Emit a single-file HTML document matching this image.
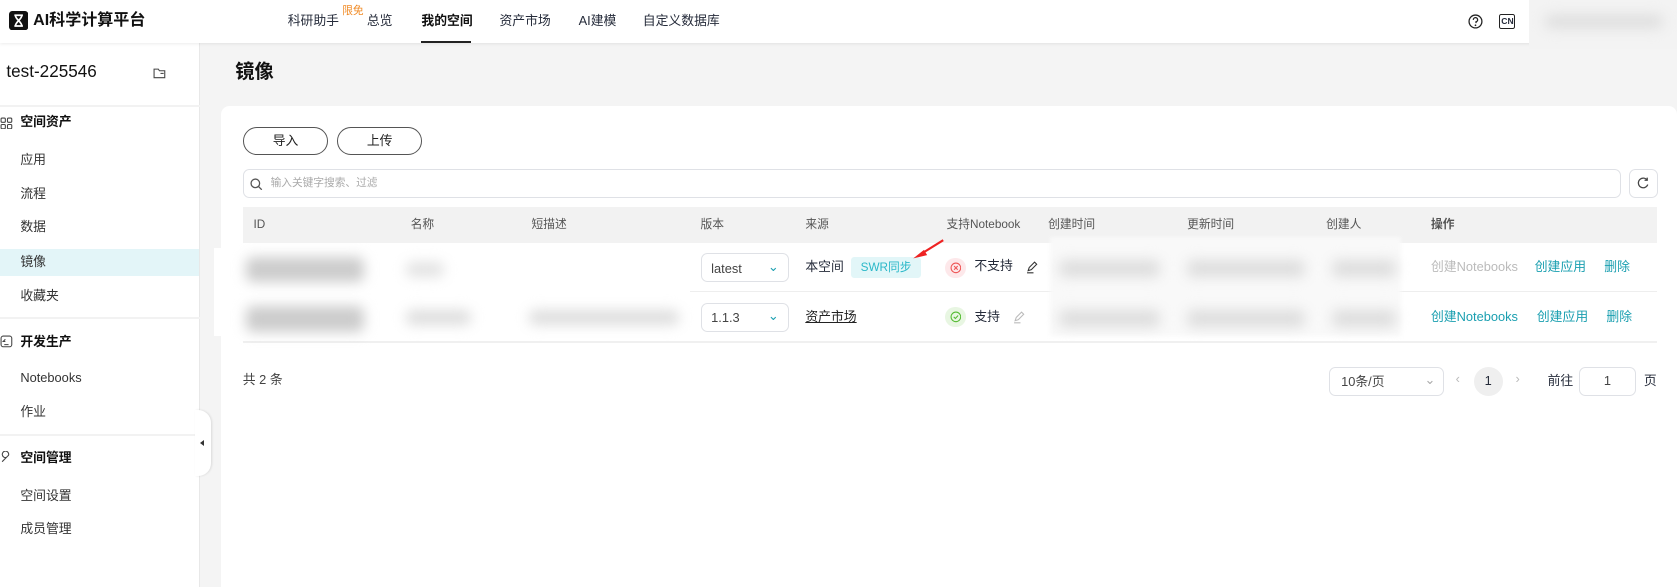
<!DOCTYPE html>
<html><head><meta charset="utf-8"><style>
*{margin:0;padding:0;box-sizing:border-box}
html,body{width:1677px;height:587px;overflow:hidden;background:#f4f4f4}
body{font-family:"Liberation Sans","Noto Sans CJK SC",sans-serif;color:#252b3a;font-size:12px;line-height:1.1}
#w{position:relative;width:1568px;height:549px;zoom:1.0695;background:#f4f4f4}
.a{position:absolute;white-space:nowrap}
.hdr{left:0;top:0;width:1568px;height:40px;background:#fff;box-shadow:0 1px 3px rgba(0,0,0,.08);z-index:2}
.side{left:0;top:40px;width:187px;height:509px;background:#fff;border-right:1px solid #e8e8e8}
.hr{position:absolute;left:0;width:187px;height:2px;background:#f2f2f2}
.si{position:absolute;left:19px;font-size:12px;color:#333}
.sh{position:absolute;left:19px;font-size:12px;font-weight:bold;color:#111}
.card{left:207px;top:99px;width:1361px;height:460px;background:#fff;border-radius:8px}
.btn{position:absolute;height:26px;border:1px solid #555;border-radius:13px;text-align:center;line-height:24px;font-size:12px;color:#222}
.th{position:absolute;top:205px;font-size:11px;color:#555}
.teal{color:#1a9fb0}
.blur{position:absolute;background:#ccc;border-radius:6px;filter:blur(6px)}
.sel{position:absolute;border:1px solid #dfe1e6;border-radius:6px;background:#fff;font-size:12px;color:#444}
</style></head><body><div id="w">
<div class="a hdr">
 <svg class="a" style="left:8px;top:10px" width="18" height="18" viewBox="0 0 18 18"><rect width="18" height="18" rx="3" fill="#111"/><path d="M5 4h8M5 14h8M6 4c0 4 6 6 6 10M12 4c0 4-6 6-6 10" stroke="#fff" stroke-width="1.6" fill="none"/></svg>
 <div class="a" style="left:31px;top:11px;font-size:15px;font-weight:bold;color:#111">AI科学计算平台</div>
 <div class="a" style="left:269px;top:13px">科研助手</div>
 <div class="a" style="left:320px;top:6px;font-size:10px;color:#f08a24">限免</div>
 <div class="a" style="left:343px;top:13px">总览</div>
 <div class="a" style="left:394px;top:13px;font-weight:bold;color:#111">我的空间</div>
 <div class="a" style="left:394px;top:38px;width:46px;height:2px;background:#222"></div>
 <div class="a" style="left:467px;top:13px">资产市场</div>
 <div class="a" style="left:541px;top:13px">AI建模</div>
 <div class="a" style="left:601px;top:13px">自定义数据库</div>
 <svg class="a" style="left:1373px;top:13px" width="14" height="14" viewBox="0 0 14 14"><circle cx="7" cy="7" r="6" stroke="#222" stroke-width="1.2" fill="none"/><path d="M5 5.5a2 2 0 1 1 2.5 1.8V8.5" stroke="#222" stroke-width="1.2" fill="none"/><circle cx="7" cy="10.5" r=".8" fill="#222"/></svg>
 <div class="a" style="left:1402px;top:13px;width:15px;height:14px;border:1.2px solid #222;border-radius:2px;font-size:8px;line-height:12px;text-align:center;font-weight:bold">CN</div>
 <div class="a" style="left:1430px;top:0;width:138px;height:46px;background:#f3f3f3"></div>
 <div class="blur" style="left:1445px;top:14px;width:110px;height:12px;background:#ddd"></div>
</div>
<div class="a side">
 <div class="a" style="left:6px;top:19px;font-size:16px;color:#111">test-225546</div>
 <svg class="a" style="left:143px;top:23px" width="12" height="11" viewBox="0 0 12 11"><path d="M1 2h4l1 1.5h5v6.5H1z" stroke="#444" fill="none"/><path d="M7 6h3" stroke="#444"/></svg>
 <div class="hr" style="top:58px"></div>
 <svg class="a" style="left:0;top:69px" width="12" height="12" viewBox="0 0 12 12"><g stroke="#444" fill="none"><rect x="1" y="1" width="4" height="4" rx="1"/><rect x="7" y="1" width="4" height="4" rx="1"/><rect x="1" y="7" width="4" height="4" rx="1"/><rect x="7" y="7" width="4" height="4" rx="1"/></g></svg>
 <div class="sh" style="top:68px">空间资产</div>
 <div class="si" style="top:103px">应用</div>
 <div class="si" style="top:135px">流程</div>
 <div class="si" style="top:166px">数据</div>
 <div class="a" style="left:0;top:193px;width:186px;height:25px;background:#e3f5f8"></div>
 <div class="si" style="top:198px">镜像</div>
 <div class="si" style="top:230px">收藏夹</div>
 <div class="hr" style="top:256px"></div>
 <svg class="a" style="left:0;top:273px" width="12" height="12" viewBox="0 0 12 12"><rect x="1" y="1" width="10" height="10" rx="2" stroke="#444" fill="none"/><path d="M5 4l-2 2 2 0M4 9h4" stroke="#444" fill="none"/></svg>
 <div class="sh" style="top:273px">开发生产</div>
 <div class="si" style="top:307px">Notebooks</div>
 <div class="si" style="top:339px">作业</div>
 <div class="hr" style="top:366px"></div>
 <svg class="a" style="left:0;top:382px" width="12" height="12" viewBox="0 0 12 12"><path d="M2 10l4-4a3 3 0 1 1 2-2l-4 4z" stroke="#444" fill="none"/></svg>
 <div class="sh" style="top:382px">空间管理</div>
 <div class="si" style="top:417px">空间设置</div>
 <div class="si" style="top:448px">成员管理</div>
</div>
<div class="a" style="left:182px;top:383px;width:15px;height:62px;background:#fff;border-radius:0 12px 12px 0;box-shadow:1px 0 2px rgba(0,0,0,.1)"></div>
<div class="a" style="left:187px;top:411px;width:0;height:0;border-top:3px solid transparent;border-bottom:3px solid transparent;border-right:4px solid #333"></div>
<div class="a" style="left:220px;top:58px;font-size:18px;font-weight:bold;color:#111">镜像</div>
<div class="a card"></div>
<div class="btn" style="left:227px;top:119px;width:80px">导入</div>
<div class="btn" style="left:315px;top:119px;width:80px">上传</div>
<div class="a" style="left:227px;top:158px;width:1289px;height:27px;border:1px solid #dfe1e6;border-radius:6px"></div>
<svg class="a" style="left:234px;top:166px" width="12" height="12" viewBox="0 0 12 12"><circle cx="5" cy="5" r="4" stroke="#555" stroke-width="1.2" fill="none"/><path d="M8 8l3 3" stroke="#555" stroke-width="1.2"/></svg>
<div class="a" style="left:253px;top:166px;font-size:10px;color:#aaa">输入关键字搜索、过滤</div>
<div class="a" style="left:1523px;top:158px;width:27px;height:27px;border:1px solid #dfe1e6;border-radius:6px"></div>
<svg class="a" style="left:1530px;top:165px" width="13" height="13" viewBox="0 0 13 13"><path d="M10.5 4A4.5 4.5 0 1 0 11 8" stroke="#444" stroke-width="1.2" fill="none"/><path d="M10.5 1.5V4H8" stroke="#444" stroke-width="1.2" fill="none"/></svg>
<div class="a" style="left:227px;top:194px;width:1322px;height:33px;background:#f2f2f2"></div>
<div class="th" style="left:237px">ID</div><div class="th" style="left:384px">名称</div><div class="th" style="left:497px">短描述</div><div class="th" style="left:655px">版本</div><div class="th" style="left:753px">来源</div><div class="th" style="left:885px">支持Notebook</div><div class="th" style="left:980px">创建时间</div><div class="th" style="left:1110px">更新时间</div><div class="th" style="left:1240px">创建人</div><div class="th" style="left:1338px;font-weight:bold">操作</div>
<div class="a" style="left:227px;top:272px;width:1322px;height:1px;background:#eee"></div>
<div class="a" style="left:227px;top:319px;width:1322px;height:2px;background:#f0f0f0"></div>
<div class="a" style="left:200px;top:232px;width:445px;height:82px;background:#fff"></div>
<div class="blur" style="left:230px;top:240px;width:110px;height:24px"></div>
<div class="blur" style="left:380px;top:245px;width:35px;height:14px;background:#e2e2e2"></div>
<div class="blur" style="left:230px;top:286px;width:110px;height:24px"></div>
<div class="blur" style="left:380px;top:290px;width:60px;height:14px;background:#ddd"></div>
<div class="blur" style="left:495px;top:290px;width:140px;height:14px;background:#ddd"></div>
<div class="a" style="left:982px;top:222px;width:328px;height:92px;background:#f9f9f9;filter:blur(2px)"></div>
<div class="blur" style="left:990px;top:243px;width:95px;height:16px;background:#ddd"></div>
<div class="blur" style="left:1110px;top:243px;width:110px;height:16px;background:#ddd"></div>
<div class="blur" style="left:1245px;top:243px;width:60px;height:16px;background:#ddd"></div>
<div class="blur" style="left:990px;top:290px;width:95px;height:16px;background:#ddd"></div>
<div class="blur" style="left:1110px;top:290px;width:110px;height:16px;background:#ddd"></div>
<div class="blur" style="left:1245px;top:290px;width:60px;height:16px;background:#ddd"></div>
<div class="sel" style="left:655px;top:237px;width:83px;height:27px"><span class="a" style="left:9px;top:7px">latest</span><span class="a teal" style="left:62px;top:5px">⌄</span></div>
<div class="sel" style="left:655px;top:283px;width:83px;height:27px"><span class="a" style="left:9px;top:7px">1.1.3</span><span class="a teal" style="left:62px;top:5px">⌄</span></div>
<div class="a" style="left:753px;top:243px">本空间</div>
<div class="a" style="left:796px;top:240px;width:65px;height:20px;background:#e2f6f8;border-radius:3px;color:#2bb8c8;font-size:11px;text-align:center;line-height:20px">SWR同步</div>
<div class="a" style="left:753px;top:290px;text-decoration:underline;color:#222">资产市场</div>
<div class="a" style="left:884px;top:241px;width:19px;height:19px;border-radius:50%;background:#fde8ea"></div>
<svg class="a" style="left:888px;top:245px" width="11" height="11" viewBox="0 0 11 11"><circle cx="5.5" cy="5.5" r="4.5" stroke="#e55" fill="none"/><path d="M3.8 3.8l3.4 3.4M7.2 3.8l-3.4 3.4" stroke="#e55"/></svg>
<div class="a" style="left:911px;top:242px">不支持</div>
<div class="a" style="left:884px;top:287px;width:19px;height:19px;border-radius:50%;background:#e8f6e2"></div>
<svg class="a" style="left:888px;top:291px" width="11" height="11" viewBox="0 0 11 11"><circle cx="5.5" cy="5.5" r="4.5" stroke="#5b3" fill="none"/><path d="M3.5 5.5l1.5 1.5 2.6-2.8" stroke="#5b3" fill="none"/></svg>
<div class="a" style="left:911px;top:290px">支持</div>
<svg class="a" style="left:959px;top:243px" width="12" height="13" viewBox="0 0 12 13"><path d="M2 10l1-3 5-5 2 2-5 5zM1 12h6" stroke="#333" fill="none"/></svg>
<svg class="a" style="left:947px;top:290px" width="12" height="13" viewBox="0 0 12 13"><path d="M2 10l1-3 5-5 2 2-5 5zM1 12h6" stroke="#bbb" fill="none"/></svg>
<div class="a" style="left:1338px;top:243px;color:#bbb">创建Notebooks</div>
<div class="a teal" style="left:1435px;top:243px">创建应用</div>
<div class="a teal" style="left:1500px;top:243px">删除</div>
<div class="a teal" style="left:1338px;top:290px">创建Notebooks</div>
<div class="a teal" style="left:1437px;top:290px">创建应用</div>
<div class="a teal" style="left:1502px;top:290px">删除</div>
<svg class="a" style="left:850px;top:222px" width="36" height="24" viewBox="0 0 36 24"><path d="M32 3L11 16" stroke="#e22" stroke-width="2"/><path d="M4 20l10-8 3 5z" fill="#e22"/></svg>
<div class="a" style="left:227px;top:349px;color:#444">共 2 条</div>
<div class="sel" style="left:1243px;top:343px;width:107px;height:27px"><span class="a" style="left:10px;top:7px">10条/页</span><span class="a" style="left:88px;top:5px;color:#aaa">⌄</span></div>
<div class="a" style="left:1361px;top:348px;color:#bbb">‹</div>
<div class="a" style="left:1378px;top:343px;width:27px;height:27px;border-radius:50%;background:#efefef;text-align:center;line-height:27px">1</div>
<div class="a" style="left:1417px;top:348px;color:#bbb">›</div>
<div class="a" style="left:1447px;top:350px">前往</div>
<div class="sel" style="left:1476px;top:343px;width:54px;height:27px;text-align:center;line-height:25px">1</div>
<div class="a" style="left:1537px;top:350px">页</div>
</div></body></html>
